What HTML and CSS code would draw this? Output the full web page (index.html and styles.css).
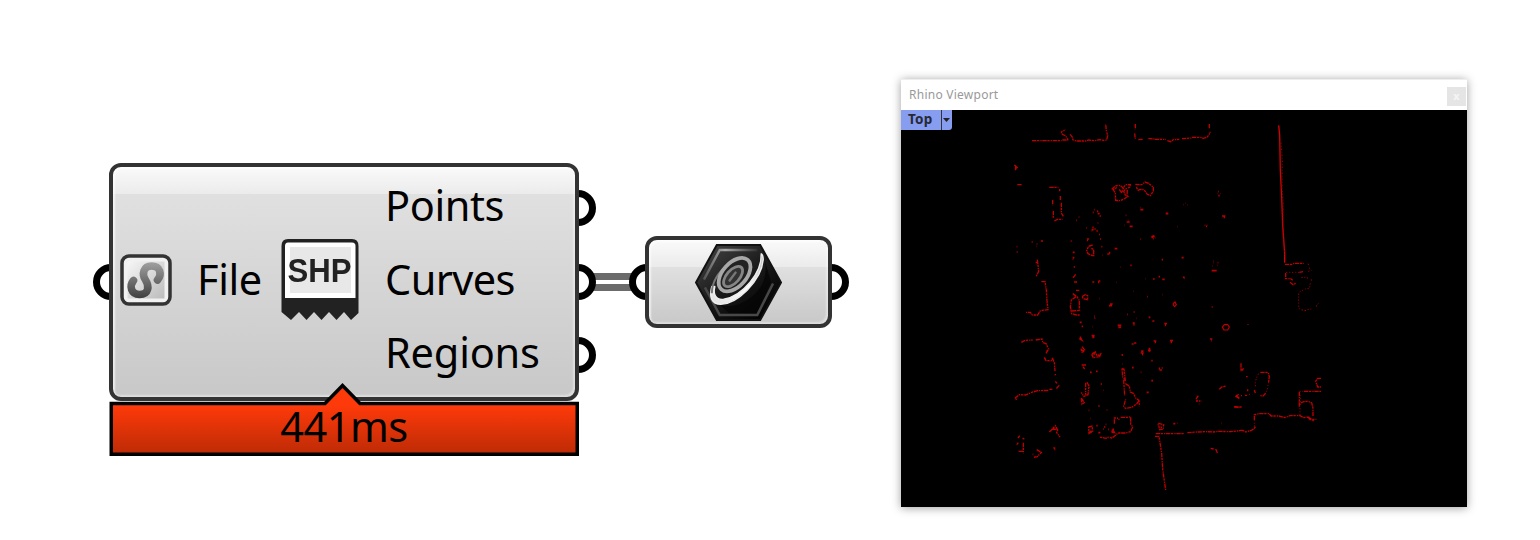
FILE: index.html
```html
<!DOCTYPE html>
<html lang="en">
<head>
<meta charset="utf-8">
<title>SHP import</title>
<link rel="stylesheet" href="styles.css">
</head>
<body>
<main class="canvas">
  <div class="wire"></div>

  <section class="node node-shp">
    <i class="port port-left port-mid"></i>
    <i class="port port-right port-top"></i>
    <i class="port port-right port-mid"></i>
    <i class="port port-right port-bottom"></i>
    <div class="body">
      <div class="inputs">
        <svg class="path-icon" viewBox="0 0 52 52">
          <defs>
            <linearGradient id="sg" gradientUnits="userSpaceOnUse" x1="0" y1="7" x2="0" y2="44"><stop offset="0" stop-color="#a4a4a4"/><stop offset="1" stop-color="#404040"/></linearGradient>
            <linearGradient id="bg" x1="0" y1="0" x2="1" y2="1"><stop offset="0" stop-color="#f6f6f6"/><stop offset="1" stop-color="#bcbcbc"/></linearGradient>
          </defs>
          <rect x="2" y="2" width="48" height="48" rx="7" fill="#f1f1f1" stroke="#333" stroke-width="3.5"/>
          <rect x="7.500" y="7.500" width="37" height="37" fill="url(#bg)"/>
          <path d="M13.500 26.500C9 32 11 40.500 19.500 40.500C29 40.500 29.500 32 25.500 26C21.500 20 23.500 12 31.500 12C40 12 42.500 20 37.500 26" fill="none" stroke="url(#sg)" stroke-width="7.600" stroke-linecap="round"/>
        </svg>
        <span class="label file">File</span>
      </div>
      <svg class="shp-icon" viewBox="0 0 80 84">
        <path d="M1.500 8Q1.500 1 8 1H72Q78.500 1 78.500 8V75L71 82L64 74L56.500 82L49 74L41.500 82L34 74L26.500 82L19 74L11 82L1.500 74Z" fill="#222"/>
        <path d="M5 8Q5 4.500 8 4.500H72Q75.500 4.500 75.500 8V60H5Z" fill="#fff"/>
        <rect x="10" y="9" width="61" height="46" fill="#e8e8e8"/>
        <text x="7.500" y="43.500" textLength="64" lengthAdjust="spacingAndGlyphs">SHP</text>
      </svg>
      <div class="outputs">
        <span class="label points">Points</span>
        <span class="label curves">Curves</span>
        <span class="label regions">Regions</span>
      </div>
    </div>
    <div class="timer">
      <svg viewBox="0 0 470 74">
        <defs><linearGradient id="red" x1="0" y1="0" x2="0" y2="1"><stop offset=".28" stop-color="#ff3a0a"/><stop offset="1" stop-color="#bd2b06"/></linearGradient></defs>
        <path d="M2.250 21.500H216L233.500 3.500L251 21.500H468.250V72.250H2.250Z" fill="url(#red)" stroke="#000" stroke-width="3.500"/>
      </svg>
      <span class="label ms">441ms</span>
    </div>
  </section>

  <section class="node node-curve">
    <i class="port port-left"></i>
    <i class="port port-right"></i>
    <div class="body body-curve">
      <svg class="hex-icon" viewBox="0 0 88 80">
        <defs>
          <linearGradient id="hg" x1="0" y1="0" x2=".8" y2="1"><stop offset="0" stop-color="#484848"/><stop offset=".5" stop-color="#1c1c1c"/><stop offset="1" stop-color="#000"/></linearGradient>
          <linearGradient id="rim" x1="0" y1="1" x2="1" y2="0"><stop offset="0" stop-color="#e0e0e0"/><stop offset=".55" stop-color="#fff"/><stop offset="1" stop-color="#a8a8a8"/></linearGradient>
          <linearGradient id="edge" x1="0" y1="0" x2="1" y2="0"><stop offset="0" stop-color="#555"/><stop offset=".4" stop-color="#aaa"/><stop offset="1" stop-color="#333"/></linearGradient>
        </defs>
        <path d="M22 2H66L87 40L66 78H22L1 40Z" fill="url(#hg)" stroke="#111" stroke-width="2"/>
        <path d="M9 37L25 7H63" fill="none" stroke="url(#edge)" stroke-width="2.500"/>
        <path d="M79 41L63 73H25L10 45" fill="none" stroke="#484848" stroke-width="2.500"/>
        <path d="M70 15Q76 40 57 55Q40 68 25 62L34 71H61L77 40Z" fill="#050505" opacity=".75"/>
        <path d="M17 44C14 55 17 62 26 62C42 62 67 39 69 17C69 14 69 12 67 11C68 30 48 54 29 57C21 58 18 52 20 44Z" fill="url(#rim)" stroke="#eee" stroke-width="1.500" stroke-linejoin="round"/>
        <path d="M17 51C17 40 24 29 34 21" fill="none" stroke="#777" stroke-width="2"/>
        <ellipse cx="40" cy="32" rx="20" ry="12" transform="rotate(-48 40 32)" fill="#222" stroke="#a8a8a8" stroke-width="3.800"/>
        <ellipse cx="38.500" cy="34" rx="12.500" ry="6.500" transform="rotate(-48 38.500 34)" fill="#333" stroke="#858585" stroke-width="2.800"/>
        <path d="M35 38L41 30" stroke="#777" stroke-width="2.500" stroke-linecap="round"/>
      </svg>
    </div>
  </section>

  <section class="viewport">
    <header class="titlebar"><span>Rhino Viewport</span><b class="close">x</b></header>
    <div class="scene">
      <div class="view-tag"><span>Top</span><svg class="caret" viewBox="0 0 10 20"><path d="M1 8H8L4.500 12Z" fill="#222"/></svg></div>
      <svg class="survey" viewBox="901 110 566 397">
        <!-- building edges and site outlines, upper part -->
        <g transform="translate(1000 110) scale(.33333)">
          <path class="line" d="M96 92H185M187 90H203V86L196 77L187 73L184 66L196 59M210 73L216 80L219 90L230 93H258L266 90L283 92L300 89L310 91L320 90L323 77L319 62L317 42M406 42V58M404 70L406 87M415 89L430 88M445 85L463 87M464 88H497M502 92L512 95L520 89L538 88M546 86L574 84M576 82H600L610 85L622 81L628 72L631 65M628 42V56"/>
          <path class="line" d="M43 165L52 173L44 181M47 168V178M52 224H65M148 232H175M179 237V244M181 258V270M184 278V309L190 319M158 270V286M160 303V323M163 333L172 328H188"/>
          <path class="line" d="M335 238L347 228L361 226L370 235L376 224L391 224L389 232L378 236L371 244L376 255L384 259L372 267L360 272L347 271L346 250L340 239L353 231M358 238L365 249L371 231M382 239L381 258M406 223L426 224L435 216L446 220L460 232V243L451 257L441 252L432 239L420 238L415 241L408 230"/>
          <path class="dots" d="M283 299h2M291 304h4M293 311h6M299 318h4M278 307h3M236 321h2M228 331h2M293 339h2M259 354h2M277 352h4M283 357h4M290 363h3M275 359h6M298 374h1M262 387h4M301 387h2M421 293h1M421 299h9M500 308h2M497 311h8M377 316h2M385 331h1M380 336h9M373 346h1M389 349h9M422 387h1M457 378h6M455 382h4M465 384h1M533 350h1M550 284h1M557 280h1M563 285h1M655 245h2M651 251h1M661 251h1M655 257h4M666 318h10M671 322h4M614 346h2M618 349h3M622 346h1"/>
        </g>
        <!-- trees and middle outlines -->
        <g transform="translate(1000 230) scale(.33333)">
          <path class="line" d="M107 97H115M112 89L116 124L109 139M124 155H135L139 180L141 212L144 239L121 242L113 255H97L91 247H78M64 337L75 331L98 330M107 330L126 327L128 338L138 341L146 357L138 370"/>
          <path class="line" d="M278 45L266 49L260 61L264 71L281 79V59L274 55M218 191L231 200L238 212V240L242 243M228 200L214 210L211 230L215 251L229 255H239M216 243L238 241M227 133L218 145M222 156H231M228 181H238M246 200L256 194L263 197V209L252 207L246 201M240 320L246 331L238 326M246 350L254 360L247 369L243 356M275 373L286 368L291 377L302 372L299 380L280 383L275 373"/>
          <path class="ring" d="M673 284H683L688 291L683 300H672L667 291ZM520 220L525 216L529 224L524 230L520 225Z"/>
          <path class="dots" d="M50 50h2M50 66h3M95 36h3M123 33h6M110 42h2M108 49h1M212 33h3M262 27h4M261 31h3M275 2h2M290 2h2M297 13h2M301 27h2M304 50h3M307 76h1M322 72h7M327 68h4M344 56h8M360 111h1M391 106h4M421 27h1M454 20h10M460 26h2M485 89h4M545 83h6M437 146h1M459 147h5M476 140h4M487 148h7M549 142h5M554 146h1M641 92h1M640 98h1M653 98h2M637 108h1M652 106h1M635 122h15M218 67h6M218 83h5M218 88h2M221 111h4M277 156h6M295 153h6M294 157h4M349 157h1M400 184h1M441 200h2M487 194h1M298 206h1M330 222h8M327 227h9M381 253h2M401 246h3M409 265h1M446 262h5M457 273h6M398 279h6M400 284h4M493 281h8M495 286h3M283 258h2M283 264h3M239 277h6M245 289h4M277 290h1M353 286h11M355 292h8M275 317h9M277 322h6M395 342h6M402 339h7M461 333h8M464 337h4M510 332h9M512 337h4M424 363h6M422 369h9M426 374h3M446 356h5M444 361h8M365 375h4M635 231h3M630 327h7M633 332h2M134 386h2M155 387h4"/>
        </g>
        <!-- lower outlines -->
        <g transform="translate(1000 350) scale(.33333)">
          <path class="line" d="M140 3L144 0M133 22L138 32H154L158 26L163 38L165 63M166 72V76M166 94L171 100M178 106L168 117M157 118H148M145 121L113 122L95 127L76 135L58 134L44 145L54 149M245 45H259M249 50L254 57M257 98V134M261 97L267 108L264 134L251 139L244 127M244 144L253 158L246 163L244 145M243 0L252 3M277 11L289 4M365 56L372 57L376 93L368 81L366 56M371 90L374 137M376 101L388 108L391 126L400 130L408 145L417 151L418 169M417 152L410 162L395 172L376 175L371 169L377 148"/>
          <path class="line" d="M343 221V204L352 204L358 209M362 202H380L392 201V222L398 231L392 245L376 249H354L347 256L336 264L323 262L318 265L297 261M148 246L158 236L166 227L173 240L170 248L180 261M157 237L169 238M59 257L54 264M68 264L73 268M50 284L55 278M70 278V310M56 304H69M110 299L124 307L112 320L101 322M595 137L589 146L590 153H604M598 161V163M658 118L665 111L680 108M702 170L718 173M708 136L718 145M265 231L276 228L278 244L267 250L266 231M475 220L491 224L490 237L479 239L475 221M336 238L344 248L333 247"/>
          <path class="line" d="M467 251H552M562 248L590 246L616 245L640 246L656 244L692 245L720 242M465 259H477L485 310L488 358L497 420M632 295L641 297M647 297L653 310"/>
          <path class="dots" d="M280 12h5M293 17h7M365 15h3M366 42h1M454 32h4M424 5h6M446 3h5M476 55h4M485 54h3M478 60h8M422 67h2M396 53h5M270 67h5M288 64h5M302 102h4M309 121h1M454 92h5M440 127h6M295 168h4M320 180h2M266 181h2M271 205h1M289 227h4M317 223h2M312 231h4M309 237h2M325 238h2M295 248h6M338 238h4M334 244h9M473 224h2M482 232h4M520 221h6M532 220h1M663 220h1M160 294h6M163 298h3M98 313h2M268 245h8"/>
        </g>
        <!-- long boundary and the east corner -->
        <g transform="translate(1200 110) scale(.33333)">
          <path class="bright" d="M236 46L239 75L241 182L245 260L248 345L254 430V458"/>
          <path class="line thin" d="M243 98L247 150L246 235L250 280L248 350L255 440"/>
          <path class="line" d="M255 463H278L282 460H312M309 485L298 487M257 489V506H272L278 511M270 517L279 524L287 520"/>
          <path class="line thin" d="M325 461V465M327 473L335 481L325 484M298 487H257M304 502H322V506M334 508V514M331 520L328 536H318L308 541L296 548V588L300 599L316 601L326 598L334 597M349 590L350 585L356 580"/>
        </g>
        <g transform="translate(1180 310) scale(.33333)">
          <path class="line" d="M183 160V186M181 180H188L190 174M198 200H203M203 238V244M178 265L168 259L176 253M183 257H186M195 256H201M207 253H209M223 240L226 249M241 187H264L268 199L266 216M257 250L249 258L241 257M163 291H185M180 361H188L197 366L214 361L223 356L226 350M223 330V314L237 311H268L273 318H297L315 323L330 317H360L371 323L384 321L390 329L409 328M358 290V244M423 205H413L407 214L413 231H423M362 279L371 275L383 274L395 278L399 295V318M376 1V3M204 42V44M384 320L402 333M372 244H423"/>
          <path class="line thin" d="M226 229V215L231 200L236 190M266 216L262 237L257 250M223 350V330M360 316V288M362 285V256M358 244H372"/>
        </g>
      </svg>
    </div>
  </section>
</main>
</body>
</html>
```
FILE: styles.css
```css
* { box-sizing: border-box; }
body { margin: 0; background: #fff; }
.canvas { position: relative; width: 1540px; height: 540px; overflow: hidden; font-family: "Noto Sans", "Open Sans", sans-serif; }
.wire { position: absolute; left: 590px; top: 273px; width: 45px; height: 18px; border: solid #6b6b6b; border-width: 7px 0; }

.node { position: absolute; }
.node-shp { left: 109px; top: 163px; width: 470px; height: 294px; }
.node-curve { left: 645px; top: 236px; width: 187px; height: 92px; }

.port { position: absolute; width: 36px; height: 36px; border: 7px solid #000; border-radius: 50%; background: #fff; }
.node-shp .port-left, .node-curve .port-left { left: -16px; }
.port-right { right: -17px; }
.port-top { top: 27px; }
.port-mid { top: 101px; }
.port-bottom { top: 174px; }
.node-curve .port { top: 28px; }

.body {
  position: relative;
  display: flex;
  align-items: center;
  width: 100%;
  height: 238px;
  padding-left: 7px;
  border: 4px solid #333;
  border-radius: 12px;
  background: linear-gradient(#fafafa 0, #ebebeb 27px, #e0e0e0 27px, #c8c8c8 100%);
  box-shadow: inset 2px 2px 2px rgba(255, 255, 255, .65), inset -2px -2px 2px rgba(255, 255, 255, .4);
}
.body-curve { height: 92px; padding: 0; justify-content: center; }

.inputs { display: flex; align-items: center; width: 160px; }
.path-icon { width: 52px; height: 52px; margin-top: -4px; }
.label { display: block; font-size: 41.5px; line-height: 73.5px; color: #000; white-space: nowrap; }
.file { margin: -5px 0 0 25px; letter-spacing: -.4px; }
.shp-icon { flex: none; width: 80px; height: 84px; margin-top: -4px; filter: blur(.7px); }
.shp-icon text { font: bold 33px "Liberation Sans", Arial, sans-serif; fill: #222; }
.outputs { margin: -5px 0 0 25px; }
.points { letter-spacing: -.4px; }
.curves { letter-spacing: -.6px; }
.regions { letter-spacing: -.2px; }

.timer { position: absolute; left: 0; top: 219px; width: 470px; height: 75px; }
.timer svg { display: block; width: 470px; height: 74px; }
.ms { position: absolute; left: 0; right: 0; top: 8px; text-align: center; letter-spacing: -.5px; }
.hex-icon { width: 87px; height: 79px; filter: blur(.7px); }

.viewport { position: absolute; left: 901px; top: 79px; width: 566px; height: 428px; box-shadow: 0 1px 9px rgba(0, 0, 0, .38); background: #fff; }
.titlebar { display: flex; align-items: center; justify-content: space-between; height: 31px; padding: 0 1px 2px 8px; border-top: 1px solid #eee; font-size: 12px; letter-spacing: .25px; color: #999; }
.close { width: 19px; height: 19px; margin-top: 5px; background: #e5e5e5; color: #f5f5f5; font-size: 11px; line-height: 17px; text-align: center; }
.scene { position: relative; height: 397px; background: #000; }
.survey { display: block; width: 566px; height: 397px; }
.view-tag { position: absolute; left: 0; top: 0; display: flex; width: 51px; height: 20px; padding-left: 7px; border-bottom-right-radius: 3px; background: #869df0; color: #262a38; font-size: 13.5px; font-weight: 700; line-height: 19px; }
.view-tag span { width: 33px; letter-spacing: .2px; }
.caret { width: 11px; height: 20px; border-left: 1px solid #333; }

.line, .bright, .dots, .ring { fill: none; }
.line { stroke: #bd0000; stroke-width: 4; stroke-dasharray: 13 2 7 3 4 2; }
.thin { stroke: #980000; stroke-width: 3; stroke-dasharray: 4 5 3 6; }
.ring { stroke: #c00000; stroke-width: 3.5; }
.bright { stroke: #d80000; stroke-width: 4; }
.dots { stroke: #b80000; stroke-width: 5; }
```
